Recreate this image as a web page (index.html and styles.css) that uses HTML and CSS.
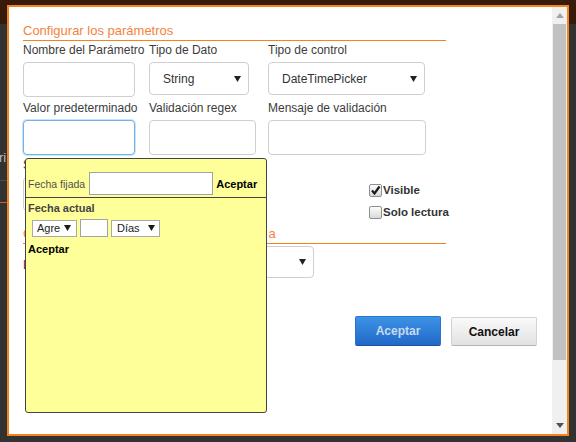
FILE: index.html
```html
<!DOCTYPE html>
<html lang="es">
<head>
<meta charset="utf-8">
<title>Configurar los parámetros</title>
<link rel="stylesheet" href="styles.css">
</head>
<body>
<div class="page">
  <div class="page-header"></div>
  <div class="page-side">
    <div class="side-text">ri</div>
    <div class="side-rule"></div>
    <div class="side-rule orange"></div>
  </div>
</div>

<div class="dialog">
  <div class="dlg-body">
    <div class="form">
      <h2 class="section-title">Configurar los parámetros</h2>
      <div class="grid">
        <div class="field first">
          <span class="lbl">Nombre del Parámetro</span>
          <div class="box w112"></div>
        </div>
        <div class="field first">
          <span class="lbl">Tipo de Dato</span>
          <div class="box select w100"><span>String</span><svg class="caret" width="7" height="6" viewBox="0 0 7 6"><path d="M0 0H7L3.5 6Z"/></svg></div>
        </div>
        <div class="field first">
          <span class="lbl">Tipo de control</span>
          <div class="box select w157"><span>DateTimePicker</span><svg class="caret" width="7" height="6" viewBox="0 0 7 6"><path d="M0 0H7L3.5 6Z"/></svg></div>
        </div>

        <div class="field">
          <span class="lbl">Valor predeterminado</span>
          <div class="box w112 focus"></div>
        </div>
        <div class="field">
          <span class="lbl">Validación regex</span>
          <div class="box w107"></div>
        </div>
        <div class="field">
          <span class="lbl">Mensaje de validación</span>
          <div class="box w158"></div>
        </div>

        <div class="field r3">
          <span class="lbl">S</span>
          <div class="box w112 r3box"></div>
        </div>
        <div class="checks">
          <div class="check">
            <span class="cbx"><svg width="11" height="11" viewBox="0 0 11 11"><path d="M2 5.5L4.5 8.5L9.5 1.5" fill="none" stroke="#1a1a1a" stroke-width="2.2"/></svg></span>
            <span>Visible</span>
          </div>
          <div class="check">
            <span class="cbx"></span>
            <span>Solo lectura</span>
          </div>
        </div>
      </div>

      <h2 class="section-title second"><span>C</span><span class="gap"></span><span>a</span></h2>
      <div class="grid">
        <div class="field r4"><span class="lbl purple">L</span></div>
        <div class="r4sel">
          <div class="box select w165"><span></span><svg class="caret" width="7" height="6" viewBox="0 0 7 6"><path d="M0 0H7L3.5 6Z"/></svg></div>
        </div>
      </div>
    </div>

    <div class="actions">
      <div class="btn btn-primary">Aceptar</div>
      <div class="btn btn-default">Cancelar</div>
    </div>
  </div>

  <div class="scrollbar">
    <div class="sb-arrow"><svg width="8" height="5" viewBox="0 0 8 5"><path d="M0 5L4 0L8 5Z" fill="#a3a3a3"/></svg></div>
    <div class="sb-thumb"></div>
    <div class="sb-fill"></div>
    <div class="sb-arrow"><svg width="8" height="5" viewBox="0 0 8 5"><path d="M0 0H8L4 5Z" fill="#505050"/></svg></div>
  </div>

  <div class="picker">
    <div class="picker-fixed">
      <span class="pk-label">Fecha fijada</span>
      <span class="pk-input wide"></span>
      <span class="pk-ok">Aceptar</span>
    </div>
    <div class="picker-rel">
      <div class="pk-title">Fecha actual</div>
      <div class="pk-row">
        <span class="pk-select s-agre"><span>Agre</span><svg width="7" height="6" viewBox="0 0 7 6"><path d="M0 0H7L3.5 6Z"/></svg></span>
        <span class="pk-input small"></span>
        <span class="pk-select s-dias"><span>Días</span><svg width="7" height="6" viewBox="0 0 7 6"><path d="M0 0H7L3.5 6Z"/></svg></span>
      </div>
      <div class="pk-ok2">Aceptar</div>
    </div>
  </div>
</div>
</body>
</html>
```

FILE: styles.css
```css
* { box-sizing: border-box; }

html, body { margin: 0; padding: 0; }

body {
  width: 576px;
  height: 442px;
  overflow: hidden;
  position: relative;
  background: #323232;
  font-family: "Liberation Sans", Arial, sans-serif;
}

/* background page */
.page-header { height: 24px; background: #381a0a; }
.page-side { width: 7px; overflow: hidden; padding-top: 126px; }
.side-text { color: #bdbdbd; font-size: 13px; line-height: 15px; white-space: nowrap; margin-left: -1px; }
.side-rule { height: 1px; background: #4c4c4c; margin-top: 15px; }
.side-rule.orange { background: #c8661e; margin-top: 21px; }

/* modal window */
.dialog {
  position: absolute;
  left: 7px;
  top: 5px;
  width: 562px;
  height: 431px;
  border: 2px solid #f5821f;
  background: #fff;
  display: flex;
}

.dlg-body { flex: 1; padding: 16px 14px 0; }

.form { width: 423px; }

.section-title {
  margin: 0;
  font-weight: normal;
  font-size: 13px;
  line-height: 16px;
  color: #f5823a;
  padding-bottom: 1px;
  border-bottom: 1px solid #f5821f;
  white-space: nowrap;
}
.section-title.second { margin-top: 3px; display: flex; }
.section-title .gap { width: 236px; }

.grid { display: grid; grid-template-columns: 126px 119px 178px; }

.field { margin-top: 4px; }
.field.first { margin-top: 2px; }
.field.r3 { margin-top: 3px; }

.lbl {
  display: block;
  font-size: 12px;
  line-height: 15px;
  color: #3c3c3c;
  margin-bottom: 4px;
  white-space: nowrap;
}
.lbl.purple { color: #7b2450; }

.box {
  height: 35px;
  border: 1px solid #cfcfcf;
  border-radius: 4px;
  background: #fff;
}
.box.focus { border-color: #74b0ec; box-shadow: 0 0 0 1px rgba(102, 175, 233, 0.35); }
.r3box { height: 34px; margin-top: 1px; }

.w112 { width: 112px; }
.w107 { width: 107px; }
.w158 { width: 158px; }
.w100 { width: 100px; }
.w157 { width: 157px; }
.w165 { width: 165px; }

.select {
  height: 33px;
  margin-top: 1px;
  display: flex;
  align-items: center;
  justify-content: space-between;
  padding: 0 7px 0 13px;
  font-size: 12px;
  color: #333;
}
.caret { fill: #222; }

.checks { grid-column: 3; padding-left: 101px; margin-top: 24px; white-space: nowrap; }
.check {
  display: flex;
  align-items: center;
  height: 22px;
  font-size: 11.5px;
  font-weight: bold;
  color: #333;
  gap: 1px;
  white-space: nowrap;
}
.cbx {
  flex: none;
  width: 13px;
  height: 13px;
  border: 1px solid #8f8f8f;
  border-radius: 2px;
  background: linear-gradient(#fdfdfd, #d9d9d9);
  display: flex;
  align-items: center;
  justify-content: center;
}

.field.r4 { margin-top: 14px; }
.r4sel { grid-column: 2 / 4; }
.r4sel .select { height: 32px; margin-top: 2px; }

/* buttons */
.actions {
  display: flex;
  justify-content: flex-end;
  gap: 10px;
  margin-top: 38px;
  padding-right: 1px;
}
.btn {
  width: 86px;
  height: 30px;
  border-radius: 2px;
  font-size: 12px;
  font-weight: bold;
  display: flex;
  align-items: center;
  justify-content: center;
}
.btn-primary {
  background: linear-gradient(#3c93e5, #2168c8);
  border: 1px solid #2c73cb;
  border-bottom-color: #1c52a0;
  color: #c8daef;
}
.btn-default {
  background: linear-gradient(#fafafa, #e1e1e1);
  border: 1px solid #d3d3d3;
  border-bottom-color: #b3b3b3;
  color: #111;
  margin-top: 1px;
  height: 29px;
}

/* scrollbar */
.scrollbar {
  width: 15px;
  background: #f0f0f0;
  display: flex;
  flex-direction: column;
}
.sb-arrow { height: 17px; display: flex; align-items: center; justify-content: center; }
.sb-thumb { height: 336px; margin: 0 1px; background: #c1c1c1; }
.sb-fill { flex: 1; }

/* date picker popup */
.picker {
  position: absolute;
  left: 16px;
  top: 151px;
  width: 242px;
  height: 255px;
  background: #ffff99;
  border: 1px solid #444;
  border-radius: 3px;
  font-size: 11px;
  color: #111;
}
.picker-fixed {
  display: flex;
  align-items: center;
  padding: 13px 2px 2px;
  border-bottom: 1px solid #444;
}
.pk-label { font-size: 10.5px; color: #505050; white-space: nowrap; }
.pk-input { background: #fff; border: 1px solid #a3a3a3; display: block; }
.pk-input.wide { width: 124px; height: 23px; margin-left: 4px; }
.pk-ok { font-weight: bold; color: #000; margin-left: 3px; }

.picker-rel { padding: 3px 2px 0; }
.pk-title { font-weight: bold; color: #444; line-height: 14px; }
.pk-row {
  display: flex;
  align-items: center;
  gap: 3px;
  height: 18px;
  margin-top: 4px;
  margin-left: 4px;
}
.pk-input.small { width: 28px; height: 18px; }
.pk-select {
  height: 17px;
  background: #fff;
  border: 1px solid #a9a9a9;
  display: flex;
  align-items: center;
  justify-content: space-between;
  color: #222;
}
.pk-select svg { fill: #1a1a1a; }
.s-agre { width: 45px; padding: 0 5px 0 4px; }
.s-dias { width: 49px; padding: 0 4px 0 5px; }
.pk-ok2 { font-weight: bold; color: #000; line-height: 14px; margin-top: 5px; }
```
